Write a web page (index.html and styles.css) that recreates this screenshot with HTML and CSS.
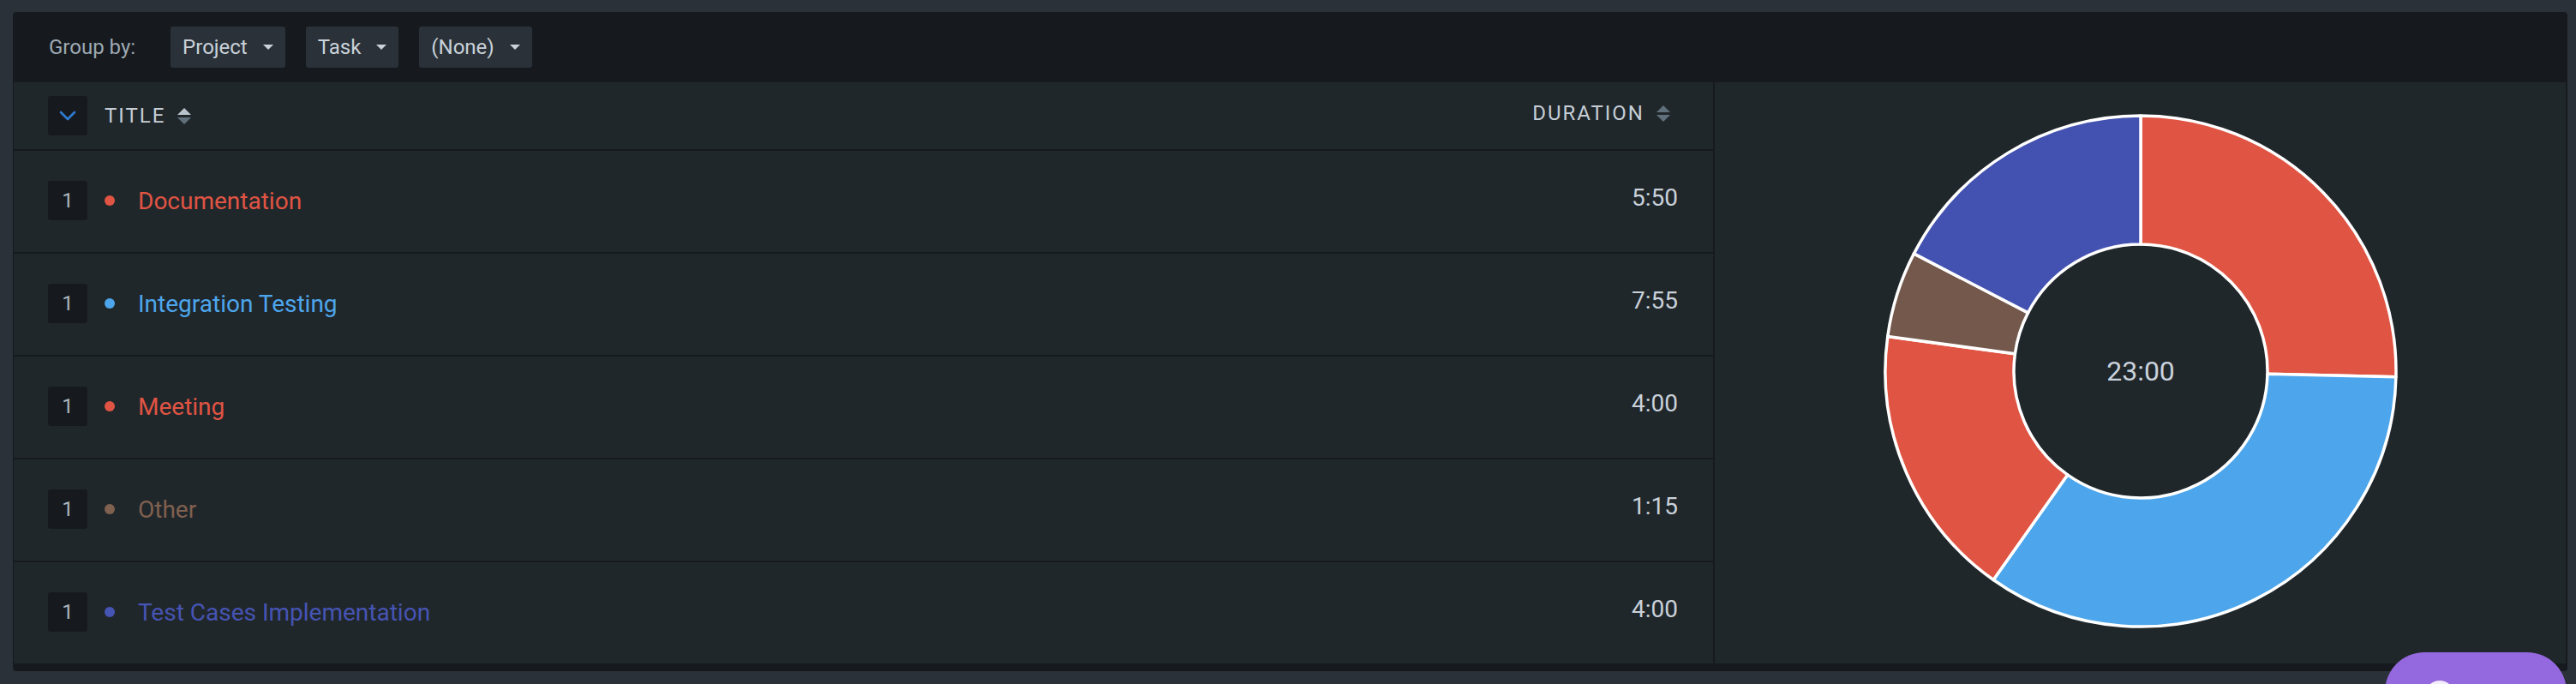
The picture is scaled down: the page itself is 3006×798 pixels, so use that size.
FILE: index.html
```html
<!DOCTYPE html>
<html lang="en">
<head>
<meta charset="utf-8">
<title>Report</title>
<link rel="stylesheet" href="styles.css">
</head>
<body>
<div class="panel">
  <div class="toolbar">
    <span class="group-label">Group by:</span>
    <div class="selects">
      <button class="select">Project<span class="caret"></span></button>
      <button class="select">Task<span class="caret"></span></button>
      <button class="select">(None)<span class="caret"></span></button>
    </div>
  </div>
  <div class="content">
    <div class="table">
      <div class="thead">
        <div class="th th-title">
          <button class="expand">
            <svg width="20" height="12" viewBox="0 0 20 12"><path d="M2 2 L10 10 L18 2" fill="none" stroke="#2f7bd0" stroke-width="2.6" stroke-linecap="round" stroke-linejoin="round"/></svg>
          </button>
          <span class="th-label">Title</span>
          <span class="sort asc"><i class="up"></i><i class="down"></i></span>
        </div>
        <div class="th th-duration">
          <span class="th-label">Duration</span>
          <span class="sort"><i class="up"></i><i class="down"></i></span>
        </div>
      </div>
      <div class="row c-red">
        <div class="cell-title"><span class="count">1</span><span class="dot"></span><span class="name">Documentation</span></div>
        <div class="cell-duration">5:50</div>
      </div>
      <div class="row c-blue">
        <div class="cell-title"><span class="count">1</span><span class="dot"></span><span class="name">Integration Testing</span></div>
        <div class="cell-duration">7:55</div>
      </div>
      <div class="row c-red">
        <div class="cell-title"><span class="count">1</span><span class="dot"></span><span class="name">Meeting</span></div>
        <div class="cell-duration">4:00</div>
      </div>
      <div class="row c-brown">
        <div class="cell-title"><span class="count">1</span><span class="dot"></span><span class="name">Other</span></div>
        <div class="cell-duration">1:15</div>
      </div>
      <div class="row c-indigo">
        <div class="cell-title"><span class="count">1</span><span class="dot"></span><span class="name">Test Cases Implementation</span></div>
        <div class="cell-duration">4:00</div>
      </div>
    </div>
    <div class="chart">
      <svg class="donut" width="600" height="600" viewBox="0 0 600 600">
        <g stroke="#ffffff" stroke-width="3.5" stroke-linejoin="round">
          <path fill="#e05443" d="M300,2 A298,298 0 0 1 597.92,306.78 L447.96,303.37 A148,148 0 0 0 300,152 Z"/>
          <path fill="#4da6eb" d="M597.92,306.78 A298,298 0 0 1 128.14,543.47 L214.65,420.92 A148,148 0 0 0 447.96,303.37 Z"/>
          <path fill="#e05443" d="M128.14,543.47 A298,298 0 0 1 4.77,259.42 L153.38,279.85 A148,148 0 0 0 214.65,420.92 Z"/>
          <path fill="#73584b" d="M4.77,259.42 A298,298 0 0 1 35.41,162.89 L168.59,231.91 A148,148 0 0 0 153.38,279.85 Z"/>
          <path fill="#4352b0" d="M35.41,162.89 A298,298 0 0 1 300,2 L300,152 A148,148 0 0 0 168.59,231.91 Z"/>
        </g>
        <text class="donut-total" x="300" y="300" text-anchor="middle" dominant-baseline="central">23:00</text>
      </svg>
    </div>
  </div>
</div>
<button class="chat-launcher"><span class="chat-icon"></span></button>
</body>
</html>
```

FILE: styles.css
```css
* {
  box-sizing: border-box;
}

html,
body {
  margin: 0;
}

body {
  width: 3006px;
  height: 798px;
  overflow: hidden;
  background: #2a3139;
  font-family: Roboto, "Liberation Sans", sans-serif;
  padding: 14px 10px 0 15px;
}

.panel {
  background: #161a1e;
  border-radius: 4px;
  padding: 0 2px 9px 1px;
}

/* toolbar */
.toolbar {
  height: 82px;
  display: flex;
  align-items: center;
  padding-left: 41px;
}

.group-label {
  font-size: 24px;
  color: #9ea9b3;
  margin-right: 41px;
}

.selects {
  display: flex;
  gap: 24px;
}

.select {
  height: 48px;
  padding: 0 14px;
  background: #2a3138;
  border: 0;
  border-radius: 3px;
  color: #c9d1d9;
  font-family: Roboto, "Liberation Sans", sans-serif;
  font-size: 24px;
  display: flex;
  align-items: center;
}

.caret {
  width: 0;
  height: 0;
  border-left: 6px solid transparent;
  border-right: 6px solid transparent;
  border-top: 6px solid #c9d1d9;
  margin-left: 18px;
}

/* content */
.content {
  display: flex;
  height: 678px;
  background: #20272b;
}

.table {
  width: 1985px;
  border-right: 2px solid #161a1e;
  display: flex;
  flex-direction: column;
}

.thead {
  display: flex;
  align-items: center;
  height: 80px;
  border-bottom: 2px solid #161a1e;
}

.th {
  display: flex;
  align-items: center;
}

.th-title {
  flex: 1;
  padding-left: 40px;
}

.th-duration {
  padding-right: 50px;
  padding-bottom: 6px;
}

.expand {
  width: 46px;
  height: 46px;
  padding: 0;
  background: #161a1e;
  border: 0;
  border-radius: 3px;
  display: flex;
  align-items: center;
  justify-content: center;
  margin-right: 20px;
}

.expand svg {
  display: block;
}

.th-label {
  font-size: 24px;
  letter-spacing: 2px;
  text-transform: uppercase;
  color: #c5cdd5;
}

.sort {
  display: flex;
  flex-direction: column;
  gap: 3px;
  margin-left: 14px;
}

.sort i {
  display: block;
  width: 0;
  height: 0;
  border-left: 8px solid transparent;
  border-right: 8px solid transparent;
}

.sort .up {
  border-bottom: 8px solid #5f707c;
}

.sort .down {
  border-top: 8px solid #5f707c;
}

.sort.asc .up {
  border-bottom-color: #b9c3cc;
}

/* rows */
.row {
  display: flex;
  align-items: center;
  height: 120px;
  border-bottom: 2px solid #161a1e;
}

.row:last-child {
  height: 118px;
  border-bottom: 0;
}

.cell-title {
  flex: 1;
  display: flex;
  align-items: center;
  padding-left: 40px;
  padding-bottom: 2px;
}

.count {
  width: 46px;
  height: 46px;
  background: #161a1e;
  border-radius: 3px;
  display: flex;
  align-items: center;
  justify-content: center;
  font-size: 24px;
  color: #aab4be;
  margin-right: 20px;
}

.dot {
  width: 12px;
  height: 12px;
  border-radius: 50%;
  background: currentColor;
  margin-right: 27px;
}

.name {
  font-size: 28px;
}

.cell-duration {
  font-size: 28px;
  color: #c9d1d9;
  padding-right: 41px;
  padding-bottom: 10px;
}

.c-red {
  color: #e05443;
}

.c-blue {
  color: #4da6eb;
}

.c-brown {
  color: #80604f;
}

.c-indigo {
  color: #4654b4;
}

/* chart */
.chart {
  flex: 1;
  display: flex;
  align-items: center;
  justify-content: center;
  padding-bottom: 4px;
}

.donut {
  display: block;
}

.donut-total {
  font-family: Roboto, "Liberation Sans", sans-serif;
  font-size: 32px;
  fill: #c9d2dc;
}

/* floating launcher */
.chat-launcher {
  position: fixed;
  left: 2783px;
  top: 761px;
  width: 212px;
  height: 92px;
  border: 0;
  padding: 0;
  border-radius: 46px;
  background: #9468de;
}

.chat-icon {
  position: absolute;
  left: 47px;
  top: 33px;
  width: 34px;
  height: 34px;
  border-radius: 50%;
  background: #f3ecfc;
}
```
